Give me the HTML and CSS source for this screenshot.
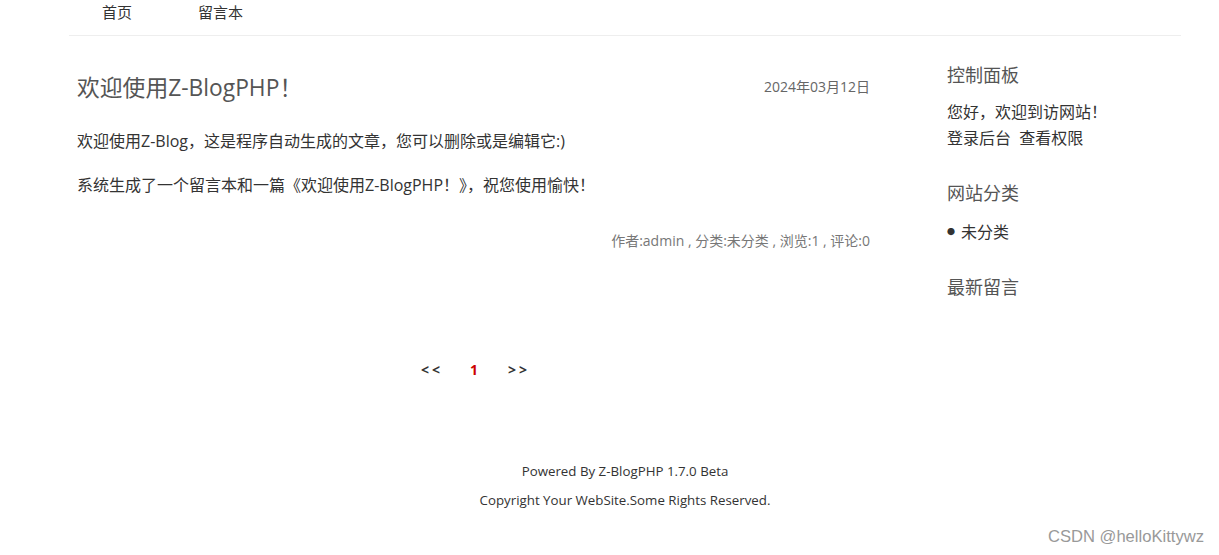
FILE: index.html
```html
<!DOCTYPE html>
<html lang="zh-CN">
<head>
    <meta charset="UTF-8">
    <title>Z-BlogPHP</title>
    <link rel="stylesheet" href="styles.css">
</head>
<body>
    <div class="wrap">
        <div class="nav">
            <a href="#">首页</a>
            <a href="#">留言本</a>
        </div>

        <div class="layout">
            <div class="main">
                <div class="post">
                    <div class="post-head">
                        <h2 class="post-title">欢迎使用Z-BlogPHP！</h2>
                        <span class="post-date">2024年03月12日</span>
                    </div>
                    <p>欢迎使用Z-Blog，这是程序自动生成的文章，您可以删除或是编辑它:)</p>
                    <p>系统生成了一个留言本和一篇《欢迎使用Z-BlogPHP！》，祝您使用愉快！</p>
                    <div class="post-meta">作者:admin , 分类:未分类 , 浏览:1 , 评论:0</div>
                </div>
                <div class="pager">
                    <a href="#">&lt;&lt;</a>
                    <span class="now">1</span>
                    <a href="#">&gt;&gt;</a>
                </div>
            </div>

            <div class="side">
                <div class="widget">
                    <h3>控制面板</h3>
                    <div class="line">您好，欢迎到访网站！</div>
                    <div class="line"><a href="#">登录后台</a>&nbsp;&nbsp;<a href="#">查看权限</a></div>
                </div>
                <div class="widget">
                    <h3>网站分类</h3>
                    <ul>
                        <li><a href="#">未分类</a></li>
                    </ul>
                </div>
                <div class="widget">
                    <h3>最新留言</h3>
                </div>
            </div>
        </div>

        <div class="footer">
            <p>Powered By Z-BlogPHP 1.7.0 Beta</p>
            <p>Copyright Your WebSite.Some Rights Reserved.</p>
        </div>
    </div>
    <div class="mark">CSDN @helloKittywz</div>
</body>
</html>
```

FILE: styles.css
```css
body {
    margin: 0;
    font-family: "Open Sans", "Noto Sans CJK SC", sans-serif;
    color: #333;
    background: #fff;
}
a {
    color: #333;
    text-decoration: none;
}
.wrap {
    width: 1112px;
    margin-left: 69px;
}
.nav {
    display: flex;
    height: 35px;
    border-bottom: 1px solid #eee;
    padding-left: 33px;
}
.nav a {
    font-size: 15px;
    line-height: 24px;
    width: 96px;
}
.layout {
    display: grid;
    grid-template-columns: 801px 1fr;
    gap: 77px;
}
.main {
    padding-left: 8px;
}
.post-head {
    display: flex;
    justify-content: space-between;
    align-items: center;
    margin-top: 38px;
}
.post-title {
    font-size: 22.8px;
    font-weight: normal;
    color: #555;
    margin: 0;
    line-height: 28px;
}
.post-date {
    font-size: 14px;
    color: #666;
    margin-top: -4px;
}
.post p {
    font-size: 16px;
    margin: 0;
    line-height: 44px;
}
.post-head + p {
    margin-top: 17px;
}
.post-meta {
    text-align: right;
    font-size: 14px;
    color: #777;
    margin-top: 23px;
}
.pager {
    display: flex;
    justify-content: center;
    gap: 27px;
    margin-top: 110px;
    padding-left: 4px;
    font-size: 14px;
    font-weight: bold;
    letter-spacing: 3px;
}
.pager .now {
    color: #c00;
}
.side {
    padding-top: 27px;
}
.widget {
    margin-bottom: 30px;
}
.widget h3 {
    font-size: 18px;
    font-weight: normal;
    color: #555;
    margin: 0 0 12px;
    line-height: 24px;
}
.widget .line {
    font-size: 16px;
    line-height: 26px;
}
.widget ul {
    list-style: none;
    margin: 0;
    padding: 2px 0 0;
}
.widget li {
    font-size: 16px;
    line-height: 26px;
}
.widget li::before {
    content: "●";
    font-size: 8px;
    vertical-align: 3px;
    margin-right: 6px;
}
.footer {
    text-align: center;
    font-size: 13.3px;
    margin-top: 78px;
}
.footer p {
    margin: 0;
    line-height: 29px;
}
.mark {
    position: absolute;
    right: 15px;
    bottom: 8px;
    font-family: "Liberation Sans", Arial, sans-serif;
    font-size: 16.6px;
    color: #999;
}
```
